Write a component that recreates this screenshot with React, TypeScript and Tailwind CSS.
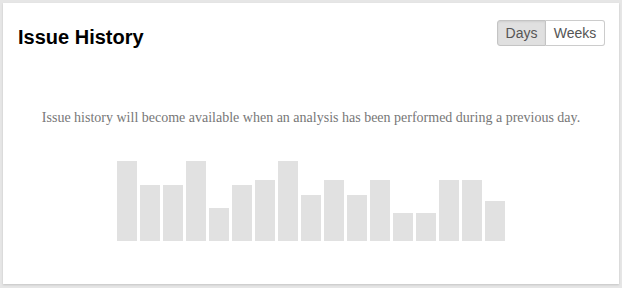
const bars = [80, 56, 56, 80, 33, 56, 61, 80, 46, 61, 46, 61, 28, 28, 61, 61, 40];

export default function App() {
  return (
    <div className="w-[622px] h-[288px] bg-[#e6e6e6] p-[3px] pb-[4px]">
      <div className="h-[281px] bg-white shadow-[0_1px_2px_rgba(0,0,0,0.15)] px-[15px] pt-[17px]">
        <div className="flex items-start justify-between">
          <h2 className="mt-[6px] text-[20px] leading-[23px] font-bold text-black font-['Liberation_Sans',Arial,sans-serif]">
            Issue History
          </h2>
          <div className="flex mr-[-1px] font-['Liberation_Sans',Arial,sans-serif] text-[14px] text-[#555]">
            <button className="h-[26px] w-[49px] rounded-l-[3px] border border-[#c4c4c4] bg-[#e0e0e0] shadow-[inset_0_1px_2px_rgba(0,0,0,0.08)]">
              Days
            </button>
            <button className="h-[26px] w-[59px] rounded-r-[3px] border border-l-0 border-[#ccc] bg-white">
              Weeks
            </button>
          </div>
        </div>
        <p className="mt-[61px] text-center text-[14px] leading-[16px] text-[#777] font-['Liberation_Serif','Times_New_Roman',serif]">
          Issue history will become available when an analysis has been performed during a previous day.
        </p>
        <div className="mt-[35px] flex h-[80px] items-end justify-center gap-[3px]">
          {bars.map((h, i) => (
            <div key={i} className="w-[20px] bg-[#e1e1e1]" style={{ height: h }} />
          ))}
        </div>
      </div>
    </div>
  );
}
